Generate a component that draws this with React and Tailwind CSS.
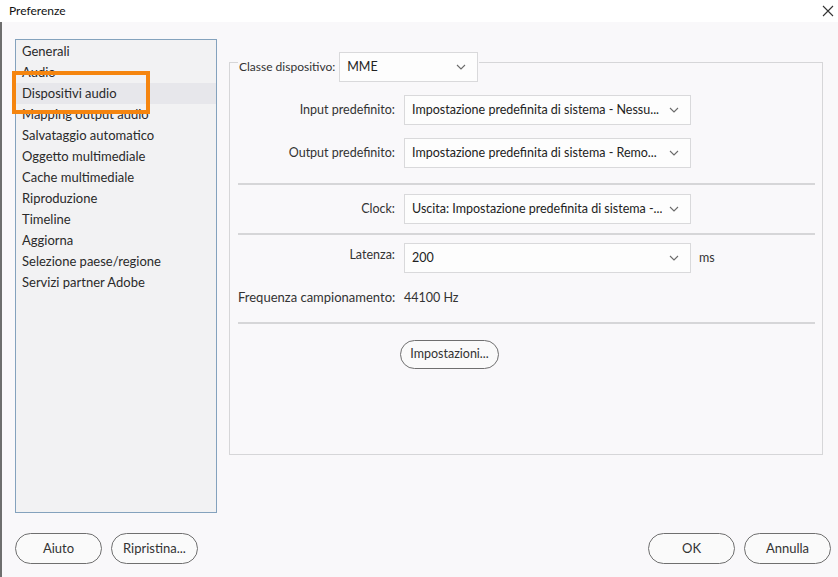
import React from "react";

const VOCI = [
  "Generali",
  "Audio",
  "Dispositivi audio",
  "Mapping output audio",
  "Salvataggio automatico",
  "Oggetto multimediale",
  "Cache multimediale",
  "Riproduzione",
  "Timeline",
  "Aggiorna",
  "Selezione paese/regione",
  "Servizi partner Adobe",
];

function Freccia() {
  return (
    <svg width="10" height="6" viewBox="0 0 10 6" className="ml-[6px] shrink-0">
      <polyline points="1,1 5,5 9,1" fill="none" stroke="#6b6b6b" strokeWidth="1.1" />
    </svg>
  );
}

function Tendina({ valore, className }) {
  return (
    <div
      className={`flex h-[30px] items-center justify-between border border-[#d9d9db] bg-[#fdfdfd] pl-[7px] pr-[11px] text-[#222] ${className}`}
    >
      <span className="min-w-0 truncate">{valore}</span>
      <Freccia />
    </div>
  );
}

function Pulsante({ children, className = "" }) {
  return (
    <button
      className={`flex h-[31px] w-[87px] items-center justify-center rounded-full border border-[#6f6f6f] bg-[#fafafa] text-[13px] text-[#333] ${className}`}
    >
      {children}
    </button>
  );
}

function Riga({ etichetta, children }) {
  return (
    <div className="flex items-center">
      <div className="w-[157px] shrink-0 text-right text-[#333]">{etichetta}</div>
      <div className="ml-[9px] flex items-center">{children}</div>
    </div>
  );
}

function Separatore() {
  return <div className="mr-[7px] h-[2px] bg-[#d6d6d8]" />;
}

export default function App() {
  return (
    <div
      className="h-[577px] w-[838px] overflow-hidden bg-[#f9f8fa] text-[12.5px]"
      style={{ fontFamily: "Lato, 'Noto Sans', sans-serif" }}
    >
      <div className="flex h-[22px] items-center justify-between bg-white pl-[9px] pr-[4px]">
        <span className="text-[12px] text-[#111]">Preferenze</span>
        <svg width="12" height="12" viewBox="0 0 12 12">
          <path d="M1 1 L11 11 M11 1 L1 11" stroke="#333" strokeWidth="1.1" />
        </svg>
      </div>

      <div className="flex h-[555px] flex-col border-l-2 border-[#6e6e6e] pl-[13px]">
        <div className="flex pt-[17px]">
          <div className="relative h-[474px] w-[202px] shrink-0 border border-[#84a2bd] bg-[#f2f2f3] pt-[1px]">
            {VOCI.map((v) => (
              <div
                key={v}
                className={`flex h-[21px] items-center pl-[6px] text-[13px] text-[#2a2a2a] ${
                  v === "Dispositivi audio" ? "bg-[#e7e7eb]" : ""
                }`}
              >
                {v}
              </div>
            ))}
            <div className="pointer-events-none absolute left-[-4px] top-[31px] h-[43px] w-[138px] border-[4px] border-[#f5850f]" />
          </div>

          <div className="ml-[12px] mt-[23px] h-[393px] w-[594px] border border-[#d6d6d8] pl-[8px]">
            <div className="-mt-[11px] flex w-fit items-center bg-[#f9f8fa] px-[1px]">
              <span className="text-[12px] text-[#333]">Classe dispositivo:</span>
              <Tendina valore="MME" className="ml-[4px] w-[139px]" />
            </div>

            <div className="mt-[13px] flex flex-col gap-[13px]">
              <Riga etichetta="Input predefinito:">
                <Tendina
                  valore="Impostazione predefinita di sistema - Nessu..."
                  className="w-[287px]"
                />
              </Riga>
              <Riga etichetta="Output predefinito:">
                <Tendina
                  valore="Impostazione predefinita di sistema - Remo..."
                  className="w-[287px]"
                />
              </Riga>
            </div>

            <div className="mt-[15px]">
              <Separatore />
            </div>

            <div className="mt-[9px]">
              <Riga etichetta="Clock:">
                <Tendina
                  valore="Uscita: Impostazione predefinita di sistema -..."
                  className="w-[287px]"
                />
              </Riga>
            </div>

            <div className="mt-[9px]">
              <Separatore />
            </div>

            <div className="mt-[8px]">
              <div className="flex items-start">
                <div className="w-[157px] shrink-0 pt-[3px] text-right text-[#333]">Latenza:</div>
                <div className="ml-[9px] flex items-center">
                  <Tendina valore="200" className="w-[287px]" />
                  <span className="ml-[8px] text-[#333]">ms</span>
                </div>
              </div>
            </div>

            <div className="mt-[15px] flex h-[20px] items-center text-[#333]">
              <span className="w-[157px] shrink-0 whitespace-nowrap text-[13px]">Frequenza campionamento:</span>
              <span className="ml-[9px]">44100 Hz</span>
            </div>

            <div className="mt-[14px]">
              <Separatore />
            </div>

            <div className="ml-[162px] mt-[16px]">
              <button className="flex h-[29px] w-[99px] items-center justify-center rounded-full border border-[#6f6f6f] bg-[#fafafa] text-[12.5px] text-[#333]">
                Impostazioni...
              </button>
            </div>
          </div>
        </div>

        <div className="mt-[20px] flex items-center pr-[7px]">
          <Pulsante>Aiuto</Pulsante>
          <Pulsante className="ml-[9px]">Ripristina...</Pulsante>
          <div className="flex-1" />
          <Pulsante>OK</Pulsante>
          <Pulsante className="ml-[9px]">Annulla</Pulsante>
        </div>
      </div>
    </div>
  );
}
